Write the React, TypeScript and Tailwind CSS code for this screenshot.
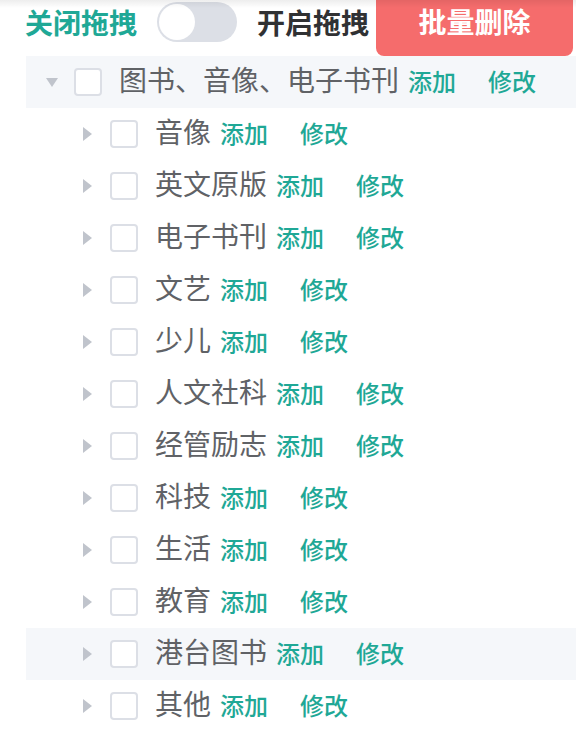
import React from "react";

const GREEN = "text-[#1fa896]";

const children = [
  "音像",
  "英文原版",
  "电子书刊",
  "文艺",
  "少儿",
  "人文社科",
  "经管励志",
  "科技",
  "生活",
  "教育",
  "港台图书",
  "其他",
];

function Row({
  label,
  level,
  expanded,
  highlight,
}: {
  label: string;
  level: number;
  expanded?: boolean;
  highlight?: boolean;
}) {
  return (
    <div
      className={`flex items-center h-[52px] ${highlight ? "bg-[#f5f7fa]" : ""}`}
      style={{ paddingLeft: level * 36 }}
    >
      <div className="w-[48px] h-full flex items-center justify-center pl-[3px]">
        {expanded ? (
          <svg width="12" height="9" viewBox="0 0 12 9">
            <polygon points="0,0 12,0 6,9" fill="#c0c4cc" />
          </svg>
        ) : (
          <svg width="9" height="14" viewBox="0 0 9 14">
            <polygon points="0,0 9,7 0,14" fill="#c0c4cc" />
          </svg>
        )}
      </div>
      <div className="w-[28px] h-[28px] rounded-[4px] border-2 border-[#dcdfe6] bg-white mr-[17px] shrink-0" />
      <div className="flex items-baseline pb-[5px]">
        <span className="text-[28px] leading-[40px] text-[#606266] whitespace-nowrap">
          {label}
        </span>
        <span className={`ml-[9px] text-[24px] leading-[40px] font-medium ${GREEN} whitespace-nowrap`}>
          添加
        </span>
        <span className={`ml-[32px] text-[24px] leading-[40px] font-medium ${GREEN} whitespace-nowrap`}>
          修改
        </span>
      </div>
    </div>
  );
}

export default function App() {
  return (
    <div
      className="relative w-[576px] h-[732px] overflow-hidden bg-white"
      style={{ fontFamily: '"Noto Sans CJK SC", "Noto Sans", sans-serif' }}
    >
      <div className="flex items-start pl-[25px] h-[56px]">
        <div className="flex items-center h-[44px]">
          <span className={`text-[28px] font-bold ${GREEN} whitespace-nowrap`}>关闭拖拽</span>
          <div className="ml-[20px] w-[80px] h-[40px] rounded-full bg-[#dcdfe6] flex items-center pl-[2px]">
            <div className="w-[36px] h-[36px] rounded-full bg-white" />
          </div>
          <span className="ml-[20px] text-[28px] font-bold text-[#303133] whitespace-nowrap">开启拖拽</span>
        </div>
        <button className="ml-[7px] -mt-[16px] h-[72px] w-[197px] rounded-[8px] bg-[#f56c6c] text-white text-[28px] font-bold flex items-center justify-center pt-[2px]">
          批量删除
        </button>
      </div>
      <div className="ml-[26px]">
        <Row label="图书、音像、电子书刊" level={0} expanded highlight />
        {children.map((c) => (
          <Row key={c} label={c} level={1} highlight={c === "港台图书"} />
        ))}
      </div>
      <div className="pointer-events-none absolute top-0 left-0 right-0 h-[8px] bg-gradient-to-b from-black/[0.07] to-transparent" />
    </div>
  );
}
